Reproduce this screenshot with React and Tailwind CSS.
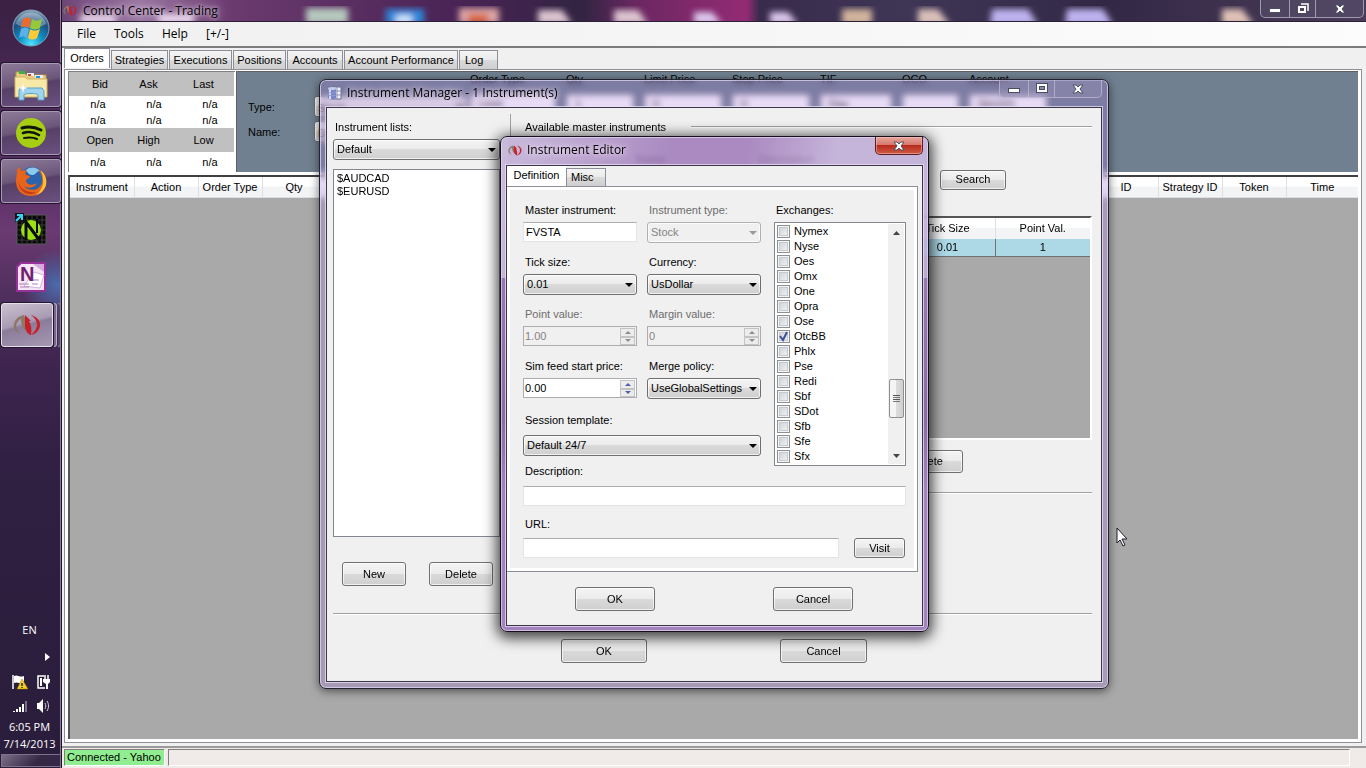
// src/App.jsx
import { useState } from "react";

const TABS = [
  { label: "Strategies", cls: "w-[57px]" },
  { label: "Executions", cls: "w-[63px]" },
  { label: "Positions", cls: "w-[53px]" },
  { label: "Accounts", cls: "w-[56px]" },
  { label: "Account Performance", cls: "w-[114px]" },
  { label: "Log", cls: "w-[39px]" },
];

const ORDER_COLS = ["Instrument", "Action", "Order Type", "Qty", "", "", "", "", "", "", "", "", "", "", "", "", "ID", "Strategy ID", "Token"];

const ORDER_FIELDS = [
  { label: "Order Type", value: "Limit", cls: "w-[86px]" },
  { label: "Qty", value: "1", cls: "w-[68px]" },
  { label: "Limit Price", value: "0", cls: "w-[78px]" },
  { label: "Stop Price", value: "0", cls: "w-[78px]" },
  { label: "TIF", value: "Day", cls: "w-[72px]" },
  { label: "OCO", value: "", cls: "w-[57px]" },
  { label: "Account", value: "Sim101", cls: "w-[78px]" },
];

const EXCHANGES = ["Nymex", "Nyse", "Oes", "Omx", "One", "Opra", "Ose", "OtcBB", "Phlx", "Pse", "Redi", "Sbf", "SDot", "Sfb", "Sfe", "Sfx"];

const FACE = "bg-[linear-gradient(to_bottom,#f4f4f4_0%,#ebebeb_49%,#dadada_50%,#cfcfcf_100%)]";
const GLASS_LINE = "border border-[#3b3548] shadow-[0_0_0_1px_rgba(235,225,250,0.75)]";
const TITLE = "flex-1 font-['Open_Sans','Noto_Sans',sans-serif] text-[12px] [text-shadow:0_0_4px_rgba(255,240,255,0.7),0_0_9px_rgba(255,240,255,0.9)]";

/* ---------- icons ---------- */

function NinjaLogo({ className }) {
  return (
    <svg viewBox="0 0 28 22" className={className} aria-hidden="true">
      <path d="M8 20C2 18 0 14 1 10 2 5 6 2 11 1l6 17-5-2C9 13 8 9 8 5 4 7 2 11 4 15c1 2 2 4 4 5Z" fill="#8d7767" />
      <path d="m12 1 6 6h-2c2 4 3 8 2 14-4-1-6-5-6-10Z" fill="#c81f28" />
      <path d="M18 1c6 2 9 5 9 10s-4 9-9 10c3-3 6-6 6-10s-2-7-6-10Z" fill="#c81f28" />
    </svg>
  );
}

function StartOrb() {
  return (
    <svg viewBox="0 0 38 38" className="size-[38px]" aria-hidden="true">
      <defs>
        <radialGradient id="orb" cx="50%" cy="95%" r="95%">
          <stop offset="0" stopColor="#4fe6ff" />
          <stop offset="0.35" stopColor="#128fc6" />
          <stop offset="0.7" stopColor="#1c4f7d" />
          <stop offset="1" stopColor="#8fa9bd" />
        </radialGradient>
      </defs>
      <circle cx="19" cy="19" r="18" fill="url(#orb)" stroke="#7fa2b9" strokeWidth="1" />
      <path d="M4 15a15.500 15.500 0 0 1 30 0c-8 5-20 5-30 0Z" fill="#fff" opacity="0.3" />
      <path d="M11 10c3-2 5-2 8 0l-2 9c-3-2-5-2-8 0Z" fill="#ee6a2c" />
      <path d="M20 10c3 2 6 2 10 0l-2 9c-4 2-7 2-10 0Z" fill="#96c83c" />
      <path d="M9 20c3-2 5-2 8 0l-2 9c-3-2-5-2-8 0Z" fill="#5cb0ea" />
      <path d="M18 20c3 2 6 2 10 0l-3 9c-3 2-6 2-9 0Z" fill="#ffcb34" />
    </svg>
  );
}

function ExplorerIcon() {
  return (
    <svg viewBox="0 0 34 32" className="h-8 w-[34px]" aria-hidden="true">
      <path d="M2 3h8l2 3h20v20H2Z" fill="#e6cd7e" stroke="#b99a45" />
      <path d="M5 2h6v3H5Z" fill="#3fae49" />
      <path d="M13 4h7v3h-7Z" fill="#e9f0f5" />
      <path d="M14 5h3v2h-3Z" fill="#d8452e" />
      <path d="M21 6h8v3h-8Z" fill="#e9f0f5" />
      <path d="M22 7h4v2h-4Z" fill="#2c8ede" />
      <path d="M1 8h10l2 2h20v18H1Z" fill="#f8e9a9" stroke="#d1b564" />
      <path d="M6 19h22l2 3v9h-6v-5c0-2-14-2-14 0v5H5v-9Z" fill="#9fd4ee" stroke="#5a9fc6" />
      <path d="m9 14 1 4 4 1-4 1-1 4-1-4-4-1 4-1Z" fill="#fff" />
    </svg>
  );
}

function SpotifyIcon() {
  return (
    <svg viewBox="0 0 30 30" className="size-[30px]" aria-hidden="true">
      <circle cx="15" cy="15" r="15" fill="#a6ce12" />
      <path d="M6 10c7-2 13-1 19 2" stroke="#10160a" strokeWidth="3" fill="none" strokeLinecap="round" />
      <path d="M7 15c6-2 11-1 16 2" stroke="#10160a" strokeWidth="2.500" fill="none" strokeLinecap="round" />
      <path d="M8 20c5-1 9-1 13 1" stroke="#10160a" strokeWidth="2" fill="none" strokeLinecap="round" />
    </svg>
  );
}

function FirefoxIcon() {
  return (
    <svg viewBox="0 0 32 32" className="size-8" aria-hidden="true">
      <circle cx="17" cy="14" r="12" fill="#2b63ad" />
      <path d="M11 5c4-4 11-3 14 1-4 0-3 3-7 4-3 0-5-1-7-5Z" fill="#8cc9ee" />
      <path d="M2 6c0-2 1-3 2-4l2 4c2-1 4-1 6 0-2 1-2 3-1 4l4 1c0 2-3 3-4 4 0 5 6 6 11 3-2 5-9 6-13 3 5 6 15 5 18-3 1-5-1-10-4-13 6 3 9 8 8 14-1 8-8 12-15 12C7 31 1 25 1 16c0-4 1-6 1-10Z" fill="#e8641b" />
      <path d="M25 5c6 4 7 10 6 15-2 6-6 9-10 10 5-4 8-10 7-16 0-4-1-6-3-9Z" fill="#fbc334" />
      <path d="M3 16c2 8 9 12 18 11-5 4-16 3-18-11Z" fill="#c23c17" />
    </svg>
  );
}

function NinjaShortcutIcon() {
  return (
    <svg viewBox="0 0 32 32" className="size-8" aria-hidden="true">
      <path d="M2 2h29v29H2Z" fill="#0a0a0a" stroke="#5b5b5b" />
      <path d="M7 2v29M12 2v29M17 2v29M22 2v29M27 2v29M2 7h29M2 12h29M2 17h29M2 22h29M2 27h29" stroke="#3a3a3a" strokeWidth="1" />
      <circle cx="16" cy="17" r="10" fill="#9be00f" />
      <path d="M11 27V9l14 19" stroke="#0a0a0a" strokeWidth="3" fill="none" />
      <path d="M22 6v14" stroke="#0a0a0a" strokeWidth="2" />
      <path d="M0 0h9v9H0Z" fill="#151515" />
      <path d="M1 8 6 3M2 2h5v5" stroke="#35d3f5" strokeWidth="2" fill="none" />
    </svg>
  );
}

function OneNoteIcon() {
  return (
    <svg viewBox="0 0 30 30" className="size-[30px]" aria-hidden="true">
      <path d="M5 1h24v28H1V5Z" fill="#f4e6f6" stroke="#97309a" strokeWidth="2" />
      <path d="M17 2h11v8Z" fill="#d5a9dc" />
      <path d="m18 10 10 3-4 13-16-2Z" fill="#fff" stroke="#d3b2d9" />
      <path d="M3 22h10M4 25h9M17 18h6M16 22h6" stroke="#b17fba" strokeWidth="1" />
      <text x="4" y="19" fontSize="20" fontWeight="bold" fontFamily="Liberation Sans, sans-serif" fill="#71226f">N</text>
    </svg>
  );
}

function DatabaseIcon() {
  return (
    <svg viewBox="0 0 14 14" className="size-3.5" aria-hidden="true">
      <path d="M5 1h8v12H5Z" fill="#eef0fa" stroke="#6d7090" />
      <path d="M9 1v12M5 5h8M5 9h8" stroke="#9094b4" />
      <path d="M0 2h8v10c-2 2-6 2-8 0Z" fill="#7a86c4" />
      <path d="M2 2v11" stroke="#d3daf6" strokeWidth="2" />
      <ellipse cx="4" cy="2.500" rx="4" ry="1.500" fill="#c2cbee" />
      <path d="M0 6c2 1 6 1 8 0M0 9c2 1 6 1 8 0" stroke="#8f9bd2" fill="none" />
    </svg>
  );
}

function CloseGlyph() {
  return (
    <svg viewBox="0 0 12 10" className="h-2.5 w-3" aria-hidden="true">
      <path d="M1 1h3l2 2 2-2h3L8 5l3 4H8L6 7 4 9H1l3-4Z" fill="#fff" stroke="#4b4c60" strokeWidth="1" />
    </svg>
  );
}

function MinGlyph() {
  return (
    <svg viewBox="0 0 12 5" className="h-[5px] w-3" aria-hidden="true">
      <rect x="0.500" y="0.500" width="11" height="4" fill="#fff" stroke="#4b4c60" />
    </svg>
  );
}

function MaxGlyph({ restore }) {
  return (
    <svg viewBox="0 0 12 11" className="h-[11px] w-3" aria-hidden="true">
      {restore && <path d="M4 1h7v7" fill="none" stroke="#fff" strokeWidth="1.500" />}
      {restore
        ? <rect x="2" y="4" width="6" height="5" fill="none" stroke="#fff" strokeWidth="2" />
        : <rect x="0.500" y="0.500" width="11" height="9" fill="#fff" stroke="#4b4c60" />}
      {!restore && <rect x="3.500" y="3.500" width="5" height="3" fill="#8a89ad" stroke="#4b4c60" />}
    </svg>
  );
}

/* ---------- controls ---------- */

function Btn({ className, children }) {
  return (
    <button className={`rounded-[3px] border border-[#707070] text-center shadow-[inset_0_0_0_1px_rgba(255,255,255,0.7)] ${FACE} ${className}`}>
      {children}
    </button>
  );
}

function Combo({ id, value, disabled, className }) {
  return (
    <div className={`relative ${className}`}>
      <select
        id={id}
        disabled={disabled}
        defaultValue={value}
        className={`block h-[21px] w-full appearance-none rounded-[3px] border pl-[3px] text-[11px] shadow-[inset_0_0_0_1px_rgba(255,255,255,0.7)] ${disabled ? "border-[#adb2b5] bg-[#f0f0f0] text-[#838383]" : `border-[#707070] text-black ${FACE}`}`}
      >
        <option>{value}</option>
      </select>
      <svg viewBox="0 0 8 4" className={`pointer-events-none absolute top-[9px] right-1 h-1 w-2 ${disabled ? "fill-[#9a9a9a]" : "fill-black"}`} aria-hidden="true">
        <path d="M0 0h8L4 4Z" />
      </svg>
    </div>
  );
}

function Spinner({ id, value, disabled }) {
  return (
    <div className={`flex h-5 border border-[#abadb3] ${disabled ? "bg-[#f0f0f0]" : "bg-white"}`}>
      <input id={id} defaultValue={value} disabled={disabled} className={`min-w-0 flex-1 pl-px text-[11px] ${disabled ? "text-[#838383]" : "text-black"}`} />
      <div className="flex w-4 flex-col pt-px pr-px">
        {["M0 3h6L3 0Z", "M0 0h6L3 3Z"].map(d => (
          <button key={d} disabled={disabled} aria-label={`${d === "M0 3h6L3 0Z" ? "Increase" : "Decrease"} ${id}`} className="flex flex-1 items-center justify-center border border-[#c4c4c4] bg-[#ececec]">
            <svg viewBox="0 0 6 3" className={`h-[3px] w-1.5 ${disabled ? "fill-[#8d8d8d]" : "fill-[#4d60a8]"}`}><path d={d} /></svg>
          </button>
        ))}
      </div>
    </div>
  );
}

function Field({ id, label, dim, children }) {
  return (
    <div className="h-13">
      <label htmlFor={id} className={`mb-[5px] block pl-0.5 leading-[14px] whitespace-nowrap ${dim ? "text-[#6d6d6d]" : ""}`}>{label}</label>
      {children}
    </div>
  );
}

function CaptionButtons({ restore, className }) {
  return (
    <div className={`flex h-[18px] rounded-b-[5px] border border-t-0 border-[#c3bdd6]/70 ${className}`}>
      <button aria-label="Minimize" className="flex w-7 items-end justify-center pb-1"><MinGlyph /></button>
      <button aria-label="Maximize" className="flex w-[27px] items-center justify-center border-x border-[#c3bdd6]/70"><MaxGlyph restore={restore} /></button>
      <button aria-label="Close" className="flex flex-1 items-center justify-center"><CloseGlyph /></button>
    </div>
  );
}

/* ---------- taskbar ---------- */

function TaskButton({ label, plain, children }) {
  return (
    <button
      aria-label={label}
      className={`flex h-11 w-[60px] items-center justify-center ${plain ? "" : "rounded-[3px] border border-[#a99bb3] bg-[linear-gradient(170deg,#8d7a98_0%,#6b5679_45%,#574067_50%,#6a5080_100%)] shadow-[0_0_0_1px_#241530]"}`}
    >
      {children}
    </button>
  );
}

function Taskbar() {
  return (
    <aside className="flex w-[62px] shrink-0 flex-col border-r border-[#1d1229] bg-[radial-gradient(circle_at_58px_285px,#4a6cae_0px,rgba(74,108,174,0)_36px),linear-gradient(to_bottom,#3a2043_0px,#44264f_60px,#5b3168_190px,#6b3a72_230px,#51305f_290px,#3f2550_360px,#2f1f41_480px,#2a1d3b_100%)] text-white shadow-[inset_-1px_0_0_#8b7d98]">
      <button aria-label="Start" className="flex h-[62px] items-center justify-center pb-1.5"><StartOrb /></button>
      <nav className="flex flex-col gap-1 pt-px pl-px">
        <TaskButton label="Explorer"><ExplorerIcon /></TaskButton>
        <TaskButton label="Spotify"><SpotifyIcon /></TaskButton>
        <TaskButton label="Firefox"><FirefoxIcon /></TaskButton>
        <TaskButton label="NinjaTrader shortcut" plain><NinjaShortcutIcon /></TaskButton>
        <TaskButton label="OneNote" plain><OneNoteIcon /></TaskButton>
        <div className="flex gap-px">
          <button aria-label="NinjaTrader" className="flex h-11 w-[53px] items-center justify-center rounded-[3px] border border-[#e4dfe9] bg-[linear-gradient(165deg,#c9c1d0_0%,#a89bb3_45%,#8b7c9a_50%,#a698b3_100%)] shadow-[0_0_0_1px_#241530]">
            <NinjaLogo className="h-[22px] w-7" />
          </button>
          <span className="h-11 w-[3px] rounded-r-[3px] border border-l-0 border-[#b8adc2] bg-[#75668a]" />
          <span className="h-11 w-[3px] rounded-r-[3px] border border-l-0 border-[#8f829c] bg-[#55456a]" />
        </div>
      </nav>
      <div className="mt-auto flex flex-col font-['Open_Sans','Noto_Sans',sans-serif] text-[11px]">
        <span className="h-5 pr-0.5 text-center leading-5">EN</span>
        <button aria-label="Show hidden icons" className="flex h-[34px] items-center justify-end pr-[11px]">
          <svg viewBox="0 0 5 8" className="h-2 w-[5px] fill-white"><path d="M0 0v8l5-4Z" /></svg>
        </button>
        <div className="grid grid-cols-[16px_16px] gap-x-2 gap-y-2 pl-3">
          <svg viewBox="0 0 16 16" className="size-4" aria-hidden="true">
            <path d="M1 1v14" stroke="#fff" strokeWidth="1.500" />
            <path d="M2 2c4-2 5 2 10 0v7c-4 2-6-2-10 0Z" fill="#fff" />
            <path d="m10 5 6 10H5Z" fill="#f6cf1c" stroke="#a07a00" strokeWidth="0.500" />
            <path d="M10 9v3M10 13v1" stroke="#222" strokeWidth="1.500" />
          </svg>
          <svg viewBox="0 0 16 16" className="size-4" aria-hidden="true">
            <path d="M8 2H2v12h7" stroke="#fff" strokeWidth="1.500" fill="none" />
            <path d="M5 4v8" stroke="#fff" strokeWidth="2" />
            <path d="M9 1v4M12 1v4" stroke="#fff" strokeWidth="1.500" />
            <path d="M7 5h7v3l-2 2v5h-2v-5L7 8Z" fill="#fff" />
          </svg>
          <svg viewBox="0 0 16 16" className="size-4" aria-hidden="true">
            <path d="M1 13h2v1H1ZM4 11h2v3H4ZM7 9h2v5H7ZM10 6h2v8h-2Z" fill="#fff" />
            <path d="M13 3h2v11h-2Z" fill="#77708a" />
          </svg>
          <svg viewBox="0 0 16 16" className="size-4" aria-hidden="true">
            <path d="M1 5h2l4-4v14l-4-4H1Z" fill="#fff" />
            <path d="M9 5c1 2 1 4 0 6M11 3c2 3 2 7 0 10" stroke="#d8d3e0" fill="none" />
          </svg>
        </div>
        <span className="mt-1 h-[17px] pr-0.5 text-center leading-[17px] whitespace-nowrap">6:05 PM</span>
        <span className="mb-0.5 h-[17px] pr-0.5 text-center leading-[17px] whitespace-nowrap">7/14/2013</span>
      </div>
      <button aria-label="Show desktop" className="mb-px ml-px h-[13px] w-[60px] border border-[#7d728a] bg-[linear-gradient(135deg,#7b7088,#342846_60%)]" />
    </aside>
  );
}

/* ---------- control center ---------- */

function TitleBackdrop() {
  return (
    <svg viewBox="0 0 1304 21" preserveAspectRatio="none" className="absolute inset-0 h-full w-full" aria-hidden="true">
      <defs>
        <linearGradient id="wall" x1="0" x2="1" y1="0" y2="0">
          <stop offset="0" stopColor="#6d4476" />
          <stop offset="0.06" stopColor="#9a76a2" />
          <stop offset="0.13" stopColor="#6b3a6f" />
          <stop offset="0.3" stopColor="#4a2456" />
          <stop offset="0.4" stopColor="#322442" />
          <stop offset="0.44" stopColor="#6b2762" />
          <stop offset="0.525" stopColor="#932b74" />
          <stop offset="0.535" stopColor="#382b4c" />
          <stop offset="0.65" stopColor="#3f3656" />
          <stop offset="0.8" stopColor="#322846" />
          <stop offset="1" stopColor="#4a3c58" />
        </linearGradient>
        <filter id="haze"><feGaussianBlur stdDeviation="3" /></filter>
      </defs>
      <rect width="1304" height="21" fill="url(#wall)" />
      <g filter="url(#haze)">
        <path d="M18 15h36v8H18ZM96 14h36v9H96Z" fill="#efdff2" />
        <path d="M244 8h42v16h-42Z" fill="#b6c8bd" />
        <path d="M324 9h38v16h-38Z" fill="#2d86da" />
        <path d="M334 15h16v10h-16Z" fill="#cfe5fa" />
        <path d="M397 8h40v16h-40Z" fill="#dda5a5" />
        <path d="M406 14h20v10h-20Z" fill="#d9663c" />
        <path d="M476 10h24l10 14h-34ZM552 10h24l10 14h-34Z" fill="#dcc4cf" />
        <path d="M632 12h18l10 12h-28ZM708 12h18l10 12h-28Z" fill="#dcc8ec" />
        <path d="M780 9h30v16h-30Z" fill="#d0b39c" />
        <path d="M856 9h20l12 16h-32Z" fill="#d9bfb8" />
        <path d="M930 9h36l10 16h-48ZM1005 9h36l10 16h-48Z" fill="#bdb2ee" />
        <path d="M1160 9h20l12 16h-32Z" fill="#dfc1b6" />
      </g>
    </svg>
  );
}

function QuoteBoard() {
  const head = (a, b, c) => (
    <tr className="h-6 bg-[#c0c0c0]">
      <th className="pl-[7px] font-normal">{a}</th>
      <th className="pr-1.5 font-normal">{b}</th>
      <th className="pr-1.5 font-normal">{c}</th>
    </tr>
  );
  const row = cls => (
    <tr className={`leading-4 ${cls}`}>
      <td className="pl-[3px]">n/a</td>
      <td className="pl-[5px]">n/a</td>
      <td className="pl-[7px]">n/a</td>
    </tr>
  );
  return (
    <div className="w-[167px] shrink-0 border-t border-l border-[#808080] bg-white">
      <table className="w-[165px] table-fixed border-collapse text-center">
        <tbody>
          {head("Bid", "Ask", "Last")}
          {row("h-4")}
          {row("h-4")}
          {head("Open", "High", "Low")}
          {row("h-5")}
        </tbody>
      </table>
    </div>
  );
}

function ControlCenter() {
  return (
    <div className="flex min-w-0 flex-1 flex-col bg-[#f0f0f0]">
      <header className="relative flex h-[22px] shrink-0 overflow-hidden border-b border-[#2b2038]">
        <TitleBackdrop />
        <div className="relative flex h-full w-full items-start">
          <NinjaLogo className="mt-[5px] ml-px h-[11px] w-3.5" />
          <h1 className={`ml-1.5 leading-[22px] ${TITLE}`}>Control Center - Trading</h1>
          <CaptionButtons restore className="mr-0.5 w-[104px] bg-[#57506c]/60" />
        </div>
      </header>
      <nav className="flex h-[26px] shrink-0 items-center border-b-2 border-[#7c7c7c] bg-[linear-gradient(to_right,#f0f0f0,#fcfcfc)] pl-[15px] font-['Open_Sans','Noto_Sans',sans-serif] text-[12px]">
        <button className="w-[37px] text-left">File</button>
        <button className="w-12 text-left">Tools</button>
        <button className="w-11 text-left">Help</button>
        <button>[+/-]</button>
      </nav>

      <div className="flex h-[21px] shrink-0 items-end gap-px pl-0.5">
        <button className="relative z-10 h-5 w-[46px] self-start border border-b-0 border-[#8c8e9a] bg-white text-center">Orders</button>
        {TABS.map(t => (
          <button key={t.label} className={`h-[19px] border border-b-0 border-[#8c8e9a] whitespace-nowrap ${t.label === "Log" ? "pl-[5px] text-left" : "text-center"} ${FACE} ${t.cls}`}>{t.label}</button>
        ))}
      </div>

      <main className="mr-1 ml-0.5 flex min-h-0 flex-1 flex-col border border-[#8c8e9a] bg-white p-[3px] pt-px">
        <div className="flex h-[101px] shrink-0 gap-px">
          <QuoteBoard />
          <section className="flex flex-1 border-t border-l border-[#606060] bg-[#708090] pl-[11px]">
            <div className="grid w-[222px] shrink-0 grid-cols-[66px_1fr] content-start gap-y-[3px] pt-6 leading-[22px]">
              <label htmlFor="type">Type:</label>
              <Combo id="type" value="Stock" className="w-[154px]" />
              <label htmlFor="name">Name:</label>
              <Combo id="name" value="Default" className="w-[154px]" />
            </div>
            <div className="flex items-start gap-2.5">
              {ORDER_FIELDS.map(f => (
                <label key={f.label} className={`${f.cls} leading-[14px]`}>
                  {f.label}
                  <input defaultValue={f.value} className="mt-2 block h-5 w-full border border-[#8c8e9a] bg-white px-2" />
                </label>
              ))}
            </div>
          </section>
        </div>
        <div className="mt-[3px] min-h-0 flex-1 border-t-2 border-l-2 border-t-[#404040] border-l-[#555] bg-[#a9a9a9]">
          <table className="w-full table-fixed border-collapse">
            <thead>
              <tr className="h-5 bg-[linear-gradient(to_bottom,#fff_45%,#f3f4f6_50%)]">
                {ORDER_COLS.map((c, i) => (
                  <th key={i} className="w-16 border-r border-b border-[#dcdfe3] p-0 text-center font-normal whitespace-nowrap">{c}</th>
                ))}
                <th className="border-b border-[#dcdfe3] p-0 font-normal">Time</th>
              </tr>
            </thead>
          </table>
        </div>
      </main>

      <footer className="mt-[3px] flex h-[22px] shrink-0 gap-[3px] border-t-2 border-[#9b9b9b] bg-[#f0ebe8] pt-px pr-4 pb-0.5 pl-0.5">
        <div className="flex w-[101px] items-center border border-[#808080] border-r-white border-b-white bg-[#90ee90] pl-0.5 whitespace-nowrap">Connected - Yahoo</div>
        <div className="flex-1 border border-[#808080] border-r-white border-b-white" />
      </footer>
    </div>
  );
}

/* ---------- instrument manager ---------- */

function Rule({ className }) {
  return <div className={`h-0.5 border-t border-[#a0a0a0] border-b border-b-white ${className}`} />;
}

function InstrumentManager() {
  return (
    <section className="absolute top-[79px] left-[319px] flex h-[610px] w-[790px] flex-col rounded-[7px] border border-[#262330] bg-[#a46edc]/25 p-[6px] pt-0 shadow-[inset_0_0_0_1px_rgba(225,220,245,0.7),0_2px_10px_rgba(0,0,0,0.55)] backdrop-blur-[3px]">
      <header className="flex h-[27px] shrink-0 items-start">
        <div className="mt-1.5 ml-0.5"><DatabaseIcon /></div>
        <h2 className={`ml-[5px] leading-[26px] ${TITLE}`}>Instrument Manager - 1 Instrument(s)</h2>
        <CaptionButtons className="w-[103px] bg-[#8f8ab0]/50" />
      </header>
      <div className={`flex min-h-0 flex-1 flex-col bg-[#f0f0f0] ${GLASS_LINE}`}>
        <div className="flex h-[505px] shrink-0">
          <div className="w-[183px] shrink-0 pt-3 pl-1.5">
            <label htmlFor="lists" className="mb-[5px] block pl-0.5 leading-[14px]">Instrument lists:</label>
            <Combo id="lists" value="Default" className="w-[167px]" />
            <ul className="mt-[9px] h-[368px] w-[167px] border border-[#828790] bg-white pt-0.5 pl-[3px] leading-[13px]">
              <li>$AUDCAD</li>
              <li>$EURUSD</li>
            </ul>
            <div className="flex gap-[23px] pt-[25px] pl-[9px]">
              <Btn className="h-6 w-16">New</Btn>
              <Btn className="h-6 w-16">Delete</Btn>
            </div>
          </div>
          <div className="mt-1.5 w-px bg-[#a0a0a0]" />
          <div className="min-w-0 flex-1 pr-[9px] pl-3.5">
            <div className="flex items-center gap-[23px] pt-3 leading-[14px]">
              <h3 className="w-[143px] whitespace-nowrap">Available master instruments</h3>
              <Rule className="flex-1" />
            </div>
            <div className="mt-[17px] flex items-end">
              <input aria-label="Search type" className="mr-[10px] h-5 w-[101px] border border-[#abadb3] bg-white" />
              <label className="w-[123px]">Name<input className="mt-0.5 block h-5 w-[110px] border border-[#abadb3] bg-white" /></label>
              <label className="w-[181px]">Description<input className="mt-0.5 block h-5 w-[130px] border border-[#abadb3] bg-white" /></label>
              <Btn className="h-5 w-[66px]">Search</Btn>
            </div>
            <div className="mt-[26px] h-[224px] border-2 border-t-[#555] border-r-white border-b-white border-l-[#808080] bg-[#a9a9a9]">
              <table className="w-full table-fixed border-collapse text-center">
                <thead>
                  <tr className="h-[21px] bg-[linear-gradient(to_bottom,#fff_45%,#f3f4f6_50%)]">
                    <th className="border-r border-[#dcdfe3]" />
                    <th className="w-[95px] border-r border-[#dcdfe3] font-normal">Tick Size</th>
                    <th className="w-[95px] font-normal">Point Val.</th>
                  </tr>
                </thead>
                <tbody>
                  <tr className="h-[18px] border-b border-[#707070] bg-[#add8e6]">
                    <td className="border-r border-[#707070]" />
                    <td className="border-r border-[#707070]">0.01</td>
                    <td>1</td>
                  </tr>
                </tbody>
              </table>
            </div>
            <div className="flex justify-end pt-[10px] pr-[129px]"><Btn className="h-[23px] w-[72px]">Delete</Btn></div>
            <Rule className="mt-[19px]" />
          </div>
        </div>
        <Rule className="mr-[9px] ml-1.5" />
        <div className="flex gap-[133px] pt-6 pl-[234px]">
          <Btn className="h-6 w-[86px]">OK</Btn>
          <Btn className="h-6 w-[87px]">Cancel</Btn>
        </div>
      </div>
    </section>
  );
}

/* ---------- instrument editor ---------- */

function ExchangeList() {
  const [checked, setChecked] = useState(["OtcBB"]);

  function toggle(name) {
    setChecked(c => (c.includes(name) ? c.filter(n => n !== name) : [...c, name]));
  }

  return (
    <div className="flex h-[244px] border border-[#828790] bg-white">
      <div className="flex-1 pt-px pl-0.5">
        {EXCHANGES.map(name => (
          <label key={name} className="flex h-[15px] items-center gap-1">
            <span className="relative flex size-[13px]">
              <input
                type="checkbox"
                checked={checked.includes(name)}
                onChange={() => toggle(name)}
                className="size-[13px] appearance-none border border-[#8e8f8f] bg-[linear-gradient(135deg,#c9ced4,#f6f6f6)] shadow-[inset_0_0_0_1px_#f4f4f4,inset_0_0_0_2px_#c6cad0]"
              />
              {checked.includes(name) && (
                <svg viewBox="0 0 13 13" className="pointer-events-none absolute inset-0 size-[13px]" aria-hidden="true">
                  <path d="m3 6 3 4 4-8" fill="none" stroke="#3b4f9b" strokeWidth="2" />
                </svg>
              )}
            </span>
            {name}
          </label>
        ))}
      </div>
      <div className="my-px mr-px flex w-4 flex-col items-center bg-[#f0f0f0]">
        <button aria-label="Scroll up" className="flex h-[17px] items-center">
          <svg viewBox="0 0 7 4" className="h-1 w-[7px] fill-[#444]"><path d="M0 4h7L3.500 0Z" /></svg>
        </button>
        <div className="mt-[138px] flex h-[39px] w-[15px] flex-col items-center justify-center gap-px rounded-[2px] border border-[#8f8f8f] bg-[linear-gradient(to_right,#f5f5f5_45%,#dcdcdc_50%,#d0d0d0)]">
          <span className="h-px w-[7px] bg-[#555]" />
          <span className="h-px w-[7px] bg-[#777]" />
          <span className="h-px w-[7px] bg-[#555]" />
          <span className="h-px w-[7px] bg-[#777]" />
        </div>
        <button aria-label="Scroll down" className="mt-auto flex h-[17px] items-center">
          <svg viewBox="0 0 7 4" className="h-1 w-[7px] fill-[#444]"><path d="M0 0h7L3.500 4Z" /></svg>
        </button>
      </div>
    </div>
  );
}

function TextBox({ id, value, className }) {
  return <input id={id} defaultValue={value} className={`block h-5 border border-[#e3e3ea] border-t-[#abadb3] bg-white pl-0.5 text-[11px] ${className}`} />;
}

function InstrumentEditor() {
  return (
    <section className="absolute top-[136px] left-[500px] flex h-[496px] w-[429px] flex-col rounded-[7px] border border-[#15101c] bg-[linear-gradient(100deg,rgba(194,178,216,0.85)_0%,rgba(158,120,184,0.85)_38%,rgba(158,120,184,0.85)_55%,rgba(190,170,214,0.85)_75%,rgba(190,170,214,0.85)_100%),linear-gradient(to_bottom,#9878b2_0%,#8a6aa2_40%,#a283be_60%,#a283be_100%)] bg-[length:100%_141px,100%_353px] bg-[position:0_0,0_141px] bg-no-repeat p-[5px] pt-0 shadow-[inset_0_0_0_1px_rgba(230,215,245,0.7),0_3px_14px_3px_rgba(0,0,0,0.75)] backdrop-blur-[2px]">
      <header className="flex h-7 shrink-0 items-start">
        <NinjaLogo className="mt-2 ml-0.5 h-[11px] w-3.5" />
        <h2 className={`ml-[5px] leading-[26px] ${TITLE}`}>Instrument Editor</h2>
        <button aria-label="Close" className="flex h-[18px] w-12 items-center justify-center rounded-b-[5px] border border-t-0 border-[#5b1d22] bg-[linear-gradient(to_bottom,#e6a79d_0%,#d8786c_45%,#b72a1c_50%,#cf5b45_100%)] shadow-[inset_0_0_0_1px_rgba(255,200,190,0.5)]">
          <CloseGlyph />
        </button>
      </header>
      <div className={`flex min-h-0 flex-1 flex-col bg-[#f0f0f0] ${GLASS_LINE}`}>
        <div className="flex h-5 shrink-0 items-end">
          <button className="relative z-10 h-5 w-[59px] bg-white pb-px text-center">Definition</button>
          <button className={`h-[18px] w-10 border border-b-0 border-[#8c8e9a] pl-1 text-left ${FACE}`}>Misc</button>
        </div>
        <div className="mr-1 h-[386px] border border-l-0 border-[#8c8e9a] bg-white p-[3px]">
          <div className="h-full bg-[#f0f0f0] pt-[13px] pr-2 pl-[13px]">
            <div className="flex justify-between">
              <div className="w-[238px]">
                <div className="grid grid-cols-[114px_114px] gap-x-[10px]">
                  <Field id="master" label="Master instrument:"><TextBox id="master" value="FVSTA" className="w-full" /></Field>
                  <Field id="itype" label="Instrument type:" dim><Combo id="itype" value="Stock" disabled /></Field>
                  <Field id="tick" label="Tick size:"><Combo id="tick" value="0.01" /></Field>
                  <Field id="currency" label="Currency:"><Combo id="currency" value="UsDollar" /></Field>
                  <Field id="point" label="Point value:" dim><Spinner id="point" value="1.00" disabled /></Field>
                  <Field id="margin" label="Margin value:" dim><Spinner id="margin" value="0" disabled /></Field>
                  <Field id="sim" label="Sim feed start price:"><Spinner id="sim" value="0.00" /></Field>
                  <Field id="merge" label="Merge policy:"><Combo id="merge" value="UseGlobalSettings" /></Field>
                </div>
                <label htmlFor="session" className="mt-0.5 mb-2 block pl-0.5 leading-[14px]">Session template:</label>
                <Combo id="session" value="Default 24/7" />
              </div>
              <div className="w-[132px]">
                <div className="mb-[5px] pl-0.5 leading-[14px]">Exchanges:</div>
                <ExchangeList />
              </div>
            </div>
            <div className="-mt-0.5 flex flex-col">
              <label htmlFor="desc" className="mb-2 pl-0.5 leading-[14px]">Description:</label>
              <TextBox id="desc" value="" className="w-full" />
              <label htmlFor="url" className="mt-[11px] mb-[7px] pl-0.5 leading-[14px]">URL:</label>
              <div className="flex items-center gap-[15px] pr-px">
                <TextBox id="url" value="" className="min-w-0 flex-1" />
                <Btn className="h-5 w-[51px]">Visit</Btn>
              </div>
            </div>
          </div>
        </div>
        <div className="flex gap-[118px] pt-[15px] pl-[68px]">
          <Btn className="h-6 w-20">OK</Btn>
          <Btn className="h-6 w-20">Cancel</Btn>
        </div>
      </div>
    </section>
  );
}

export default function App() {
  return (
    <div className="relative flex h-screen overflow-hidden font-['Liberation_Sans',Arial,sans-serif] text-[11px] text-black">
      <Taskbar />
      <ControlCenter />
      <InstrumentManager />
      <InstrumentEditor />
      <svg viewBox="0 0 12 20" className="absolute top-[527px] left-[1116px] h-5 w-3" aria-hidden="true">
        <path d="M1 1v15l3-3 3 6 2-1-3-6h5Z" fill="#fff" stroke="#1a1a2a" />
      </svg>
    </div>
  );
}
